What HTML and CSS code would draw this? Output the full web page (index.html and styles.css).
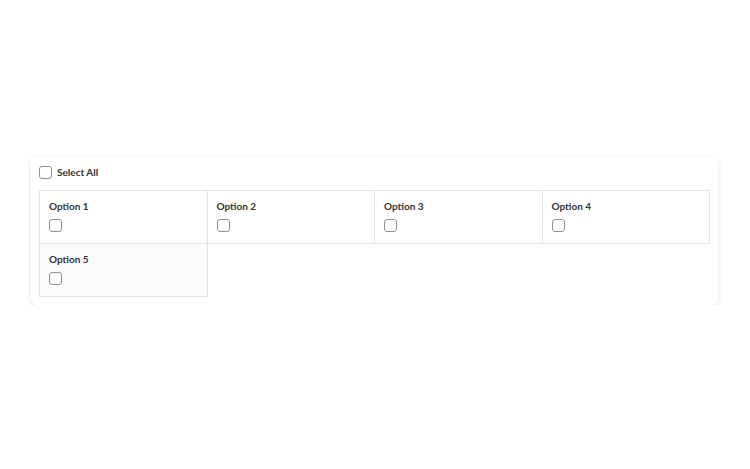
FILE: index.html
```html
<!DOCTYPE html>
<html lang="en">

<head>
    <meta charset="UTF-8">
    <meta name="viewport" content="width=device-width, initial-scale=1.0">
    <title>Checkbox Grid</title>
    <link rel="stylesheet" href="styles.css">
</head>

<body>

    <div class="card">
        <!-- select all row -->
        <label class="select-all">
            <input type="checkbox" id="select-all">
            <span>Select All</span>
        </label>

        <!-- options grid -->
        <div class="option-grid">
            <label class="option-cell">
                <span class="option-name">Option 1</span>
                <input type="checkbox" class="option-box">
            </label>
            <label class="option-cell">
                <span class="option-name">Option 2</span>
                <input type="checkbox" class="option-box">
            </label>
            <label class="option-cell">
                <span class="option-name">Option 3</span>
                <input type="checkbox" class="option-box">
            </label>
            <label class="option-cell">
                <span class="option-name">Option 4</span>
                <input type="checkbox" class="option-box">
            </label>
            <label class="option-cell last">
                <span class="option-name">Option 5</span>
                <input type="checkbox" class="option-box">
            </label>
        </div>
    </div>

    <script>
        const selectAll = document.getElementById('select-all');
        const boxes = document.querySelectorAll('.option-box');

        selectAll.addEventListener('change', function () {
            boxes.forEach(box => box.checked = selectAll.checked);
        });

        boxes.forEach(box => {
            box.addEventListener('change', function () {
                selectAll.checked = [...boxes].every(b => b.checked);
            });
        });
    </script>

</body>

</html>
```

FILE: styles.css
```css
body {
    font-family: Lato, "Noto Sans", sans-serif;
    margin: 0;
    padding: 157px 32px 0 31px;
    background-color: #fff;
    color: #333;
}

.card {
    background-color: #fff;
    border-radius: 6px;
    box-shadow: 0 2px 6px rgba(0, 0, 0, 0.12);
    padding: 8px;
}

input[type="checkbox"] {
    appearance: none;
    -webkit-appearance: none;
    width: 13px;
    height: 13px;
    margin: 0;
    border: 1px solid #8e9198;
    border-radius: 3px;
    background-color: #fff;
    box-sizing: border-box;
    cursor: pointer;
}

input[type="checkbox"]:checked {
    background-color: #0f6cbd;
    border-color: #0f6cbd;
}

.select-all {
    display: flex;
    align-items: center;
    gap: 5px;
    height: 14px;
    padding-bottom: 1px;
    font-size: 10px;
    font-weight: 700;
    margin-bottom: 10px;
}

.option-grid {
    display: grid;
    grid-template-columns: repeat(4, 1fr);
    border-top: 1px solid #e2e2e2;
    border-left: 1px solid #e2e2e2;
}

.option-cell {
    display: flex;
    flex-direction: column;
    align-items: flex-start;
    padding: 8px 9px 11px;
    border-right: 1px solid #e2e2e2;
    border-bottom: 1px solid #e2e2e2;
}

.option-cell.last {
    background-color: #fbfbfb;
}

.option-name {
    font-size: 10px;
    font-weight: 700;
    line-height: 14px;
    margin-bottom: 6px;
}
```
